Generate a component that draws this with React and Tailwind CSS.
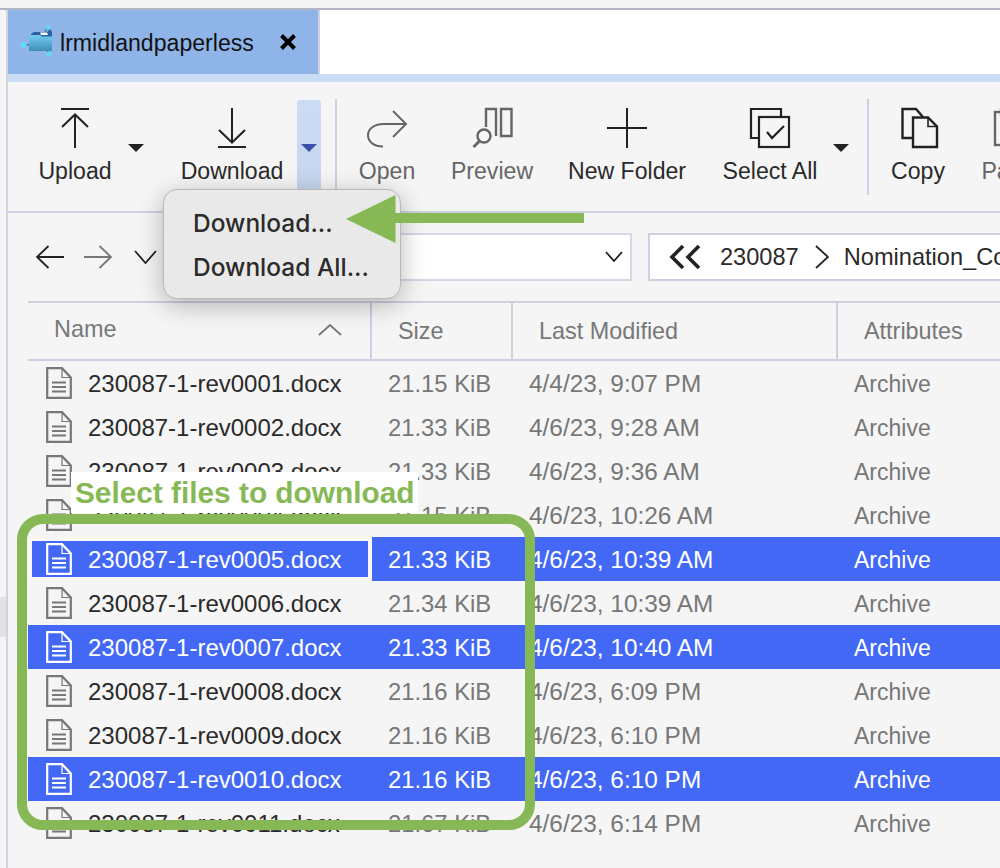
import React from 'react';

const files = [
    { name: '230087-1-rev0001.docx', size: '21.15 KiB', date: '4/4/23, 9:07 PM' },
    { name: '230087-1-rev0002.docx', size: '21.33 KiB', date: '4/6/23, 9:28 AM' },
    { name: '230087-1-rev0003.docx', size: '21.33 KiB', date: '4/6/23, 9:36 AM' },
    { name: '230087-1-rev0004.docx', size: '21.15 KiB', date: '4/6/23, 10:26 AM' },
    { name: '230087-1-rev0005.docx', size: '21.33 KiB', date: '4/6/23, 10:39 AM', selected: true, focused: true },
    { name: '230087-1-rev0006.docx', size: '21.34 KiB', date: '4/6/23, 10:39 AM' },
    { name: '230087-1-rev0007.docx', size: '21.33 KiB', date: '4/6/23, 10:40 AM', selected: true },
    { name: '230087-1-rev0008.docx', size: '21.16 KiB', date: '4/6/23, 6:09 PM' },
    { name: '230087-1-rev0009.docx', size: '21.16 KiB', date: '4/6/23, 6:10 PM' },
    { name: '230087-1-rev0010.docx', size: '21.16 KiB', date: '4/6/23, 6:10 PM', selected: true },
    { name: '230087-1-rev0011.docx', size: '21.67 KiB', date: '4/6/23, 6:14 PM' },
];

const Icon = ({ color = '#222', width = 2, children }) => (
    <svg width="40" height="40" viewBox="0 0 40 40" fill="none" stroke={color} strokeWidth={width} className="block overflow-visible">
        {children}
    </svg>
);

const Caret = ({ color = '#222' }) => (
    <svg width="16" height="8" viewBox="0 0 16 8" className="block">
        <path d="M0 0H16L8 8Z" fill={color} />
    </svg>
);

const Chevron = ({ w = 23, h = 14, color = '#222', up = false }) => (
    <svg width={w} height={h} viewBox={`0 0 ${w} ${h}`} fill="none" stroke={color} strokeWidth="1.8" className="block shrink-0">
        {up
            ? <path d={`M1 ${h - 1}L${w / 2} 1L${w - 1} ${h - 1}`} />
            : <path d={`M1 1L${w / 2} ${h - 1}L${w - 1} 1`} />}
    </svg>
);

const FileIcon = ({ color }) => (
    <svg width="26" height="32" viewBox="0 0 26 32" fill="none" stroke={color} className="block shrink-0">
        <path d="M1.2 1.2H16L24.8 10.5V30.8H1.2Z" strokeWidth="2.2" />
        <path d="M16 1.2V10.5H24.8" strokeWidth="1.2" />
        <path d="M6 15.5H20M6 20H20M6 24.5H20" strokeWidth="1.8" />
    </svg>
);

const FolderLogo = () => (
    <svg width="34" height="34" viewBox="0 0 34 34" className="block shrink-0">
        <defs>
            <linearGradient id="folderFill" x1="0" y1="0" x2="0" y2="1">
                <stop offset="0" stopColor="#74cdf0" />
                <stop offset="1" stopColor="#3f8db8" />
            </linearGradient>
        </defs>
        <path d="M4 21L10 19M27 3L25 7M27 25L29 29" stroke="#2a6aa8" strokeWidth="1.2" />
        <path d="M11 9L14 7H27L30 4L32 7V12H11Z" fill="#2d5fa8" />
        <path d="M20 7.5H27L28 10H21Z" fill="#ffffff" />
        <path d="M9 10H20L22 11.5H32V26H9Z" fill="url(#folderFill)" />
        <circle cx="3.5" cy="20" r="3" fill="#5fdcf5" />
        <circle cx="28" cy="2.5" r="2.2" fill="#5fdcf5" />
        <circle cx="29" cy="29" r="2.5" fill="#5fdcf5" />
    </svg>
);

const ToolButton = ({ icon, label, className, muted }) => (
    <div className={`flex flex-col items-center pt-[9px] shrink-0 ${className}`}>
        {icon}
        <span className={`mt-[9px] leading-[28px] whitespace-nowrap ${muted ? 'text-[#666]' : 'text-[#2a2a2a]'}`}>{label}</span>
    </div>
);

const Divider = ({ className }) => <div className={`w-[2px] h-[96px] bg-[#cdd0e0] shrink-0 ${className}`} />;

const Toolbar = () => (
    <div className="h-[131px] border-b-2 border-[#cdd0e0] flex items-start pt-[17px] text-[23.1px] shrink-0">
        <ToolButton
            className="w-[94px] ml-[20px]"
            label="Upload"
            icon={<Icon><path d="M6 1H34M20 6.5V40M7 19L20 6.5L33 19" /></Icon>}
        />
        <div className="w-[28px] pt-[45px] flex justify-center shrink-0"><Caret /></div>
        <ToolButton
            className="w-[120px] ml-[22px]"
            label="Download"
            icon={<Icon><path d="M20 0V34M7 22L20 34.5L33 22M6 39H34" /></Icon>}
        />
        <div className="w-[24px] h-[91px] ml-[5px] mt-[1px] rounded-t-[3px] bg-gradient-to-b from-[#cbdcf5] to-[#c6d6ee] flex justify-center pt-[44px] shrink-0">
            <Caret color="#3a52a8" />
        </div>
        <Divider className="ml-[14px]" />
        <ToolButton
            className="w-[60px] ml-[20px]"
            muted
            label="Open"
            icon={<Icon color="#666"><path d="M26 3L39 16L26 29M39 16H17C7 16 1 21 1 27C1 34 7 38.5 16 38.5" /></Icon>}
        />
        <ToolButton
            className="w-[80px] ml-[35px]"
            muted
            label="Preview"
            icon={
                <Icon color="#666" width={2.4}>
                    <path d="M14 19V1H24V28M29 1H39.5V28H29Z" />
                    <circle cx="12" cy="28" r="6.5" />
                    <path d="M7.5 33L1.5 39" strokeWidth="3" />
                </Icon>
            }
        />
        <ToolButton
            className="w-[140px] ml-[25px]"
            label="New Folder"
            icon={<Icon><path d="M20 0V40M0 20H40" /></Icon>}
        />
        <ToolButton
            className="w-[120px] ml-[13px]"
            label="Select All"
            icon={
                <Icon width={2.2}>
                    <path d="M8 30H1V1H31V9" />
                    <rect x="9" y="9" width="30" height="30" />
                    <path d="M17 24L22 30L34 18" />
                </Icon>
            }
        />
        <div className="w-[22px] pt-[45px] flex justify-center shrink-0"><Caret /></div>
        <Divider className="ml-[15px]" />
        <ToolButton
            className="w-[60px] ml-[19px]"
            label="Copy"
            icon={
                <Icon width={2.4}>
                    <path d="M14 30H4.5V1H18L25 9" />
                    <path d="M15 9.5H30L39 18.5V39H15Z" />
                    <path d="M30 9.5V18.5H39" strokeWidth="1.6" />
                </Icon>
            }
        />
        <ToolButton
            className="w-[60px] ml-[33px]"
            muted
            label="Paste"
            icon={
                <Icon color="#666" width={2.4}>
                    <rect x="4" y="4" width="32" height="33" />
                    <rect x="10" y="1" width="20" height="6" />
                </Icon>
            }
        />
    </div>
);

const NavBar = () => (
    <div className="h-[88px] flex items-center shrink-0 pb-[1px]">
        <svg width="28" height="24" viewBox="0 0 28 24" fill="none" stroke="#222" strokeWidth="1.8" className="block ml-[28px] shrink-0">
            <path d="M28 12H1M12.5 1L1 12L12.5 23" />
        </svg>
        <svg width="28" height="24" viewBox="0 0 28 24" fill="none" stroke="#777" strokeWidth="1.8" className="block ml-[20px] shrink-0">
            <path d="M0 12H27M15.5 1L27 12L15.5 23" />
        </svg>
        <div className="ml-[22px]"><Chevron /></div>
        <div className="ml-[11px] w-[464px] h-[48px] bg-white border-2 border-[#d5d8e6] flex items-center justify-end pr-[7px] shrink-0">
            <Chevron w={18} h={11} />
        </div>
        <div className="ml-[16px] w-[420px] h-[48px] bg-white border-2 border-[#cdd0e0] flex items-center text-[#2a2a2a] text-[23.6px] shrink-0">
            <svg width="32" height="24" viewBox="0 0 32 24" fill="none" stroke="#222" strokeWidth="3.6" className="block ml-[19px] shrink-0">
                <path d="M14 1L3 12L14 23M30 1L19 12L30 23" />
            </svg>
            <span className="ml-[19px] pt-[3px]">230087</span>
            <svg width="14" height="24" viewBox="0 0 14 24" fill="none" stroke="#222" strokeWidth="1.8" className="block ml-[16px] shrink-0">
                <path d="M1 1L13 12L1 23" />
            </svg>
            <span className="ml-[15px] pt-[3px] whitespace-nowrap">Nomination_Co</span>
        </div>
    </div>
);

const TableHeader = () => (
    <div className="h-[60px] flex border-y-2 border-[#cdd0e0] text-[#777] text-[23.4px] shrink-0">
        <div className="w-[344px] border-r-2 border-[#cdd0e0] pl-[26px] pr-[28px] pb-[2px] flex items-center justify-between">
            <span>Name</span>
            <Chevron w={24} h={12} color="#777" up />
        </div>
        <div className="w-[141px] border-r-2 border-[#cdd0e0] pl-[26px] pt-[2px] flex items-center">Size</div>
        <div className="w-[325px] border-r-2 border-[#cdd0e0] pl-[26px] pt-[2px] flex items-center">Last Modified</div>
        <div className="flex-1 pl-[26px] pt-[2px] flex items-center">Attributes</div>
    </div>
);

const FileRow = ({ file }) => {
    const sub = file.selected ? 'text-white' : 'text-[#777]';
    return (
        <div className={`h-[44px] flex items-center text-[23.8px] ${file.selected ? 'bg-[#4268f5]' : ''}`}>
            <div className={`w-[344px] h-full flex items-center gap-[16px] ${file.focused ? 'border-4 border-[#f7f7f7] pl-[14px]' : 'pl-[18px]'}`}>
                <FileIcon color={file.selected ? '#ffffff' : '#777777'} />
                <span className={`block pt-[2px] text-[24px] whitespace-nowrap ${file.selected ? 'text-white' : 'text-[#2a2a2a]'}`}>{file.name}</span>
            </div>
            <div className={`w-[141px] pl-[16px] pt-[2px] whitespace-nowrap ${sub}`}>{file.size}</div>
            <div className={`w-[325px] pl-[16px] pt-[2px] text-[24.4px] whitespace-nowrap ${sub}`}>{file.date}</div>
            <div className={`flex-1 pl-[16px] pt-[2px] text-[23px] ${sub}`}>Archive</div>
        </div>
    );
};

const App = () => (
    <div className="relative w-[1000px] h-[868px] overflow-hidden bg-[#f5f5f5] flex flex-col font-['Liberation_Sans',Arial,sans-serif]">
        <div className="h-[10px] border-b-2 border-[#b4b5c4] shrink-0" />
        <div className="flex-1 flex min-h-0">
            <div className="w-[6px] shrink-0">
                <div className="mt-[587px] h-[40px] bg-[#e2e2e2]" />
            </div>
            <div className="flex-1 min-w-0 border-l-2 border-[#d0d3e2] flex flex-col">
                {/* Tabs */}
                <div className="h-[64px] flex bg-white shrink-0">
                    <div className="w-[312px] bg-[#8fb4e8] border-r-2 border-[#cdd0e0] flex items-center pl-[12px]">
                        <FolderLogo />
                        <span className="ml-[6px] pt-[2px] text-[23.1px] text-[#111]">lrmidlandpaperless</span>
                        <svg width="16" height="16" viewBox="0 0 16 16" stroke="#000" strokeWidth="4" className="block ml-[26px] shrink-0">
                            <path d="M1.5 1.5L14.5 14.5M14.5 1.5L1.5 14.5" />
                        </svg>
                    </div>
                </div>
                <div className="h-[8px] bg-[#cbdcf5] shrink-0" />
                <Toolbar />
                <NavBar />
                <div className="ml-[20px] flex flex-col">
                    <TableHeader />
                    {files.map((file) => <FileRow key={file.name} file={file} />)}
                </div>
            </div>
        </div>

        {/* Annotation: green box and label */}
        <div className="absolute left-[17px] top-[514px] w-[518px] h-[316px] border-[10px] border-[#86b955] rounded-[26px]" />
        <div className="absolute left-[71px] top-[472px] w-[347px] h-[41px] bg-white pl-[4px] pt-[2px] flex items-center text-[29.8px] font-bold text-[#86b955] whitespace-nowrap">
            Select files to download
        </div>

        {/* Download dropdown */}
        <div className="absolute left-[163px] top-[189px] w-[238px] h-[110px] rounded-[14px] bg-[#e9e9e9] border border-[#b8b8b8] shadow-[0_6px_26px_rgba(0,0,0,0.28)] pl-[29px] pt-[11px] font-['Inter',sans-serif] font-medium text-[24.5px] leading-[44px] text-[#2b2b2b]">
            <div>Download...</div>
            <div>Download All...</div>
        </div>

        {/* Annotation: green arrow */}
        <div className="absolute left-[395px] top-[213px] w-[189px] h-[10px] bg-[#86b955]" />
        <svg width="50" height="48" viewBox="0 0 50 48" className="absolute left-[346px] top-[195px]">
            <path d="M0 24L49.5 0V48Z" fill="#86b955" />
        </svg>
    </div>
);

export default App;
